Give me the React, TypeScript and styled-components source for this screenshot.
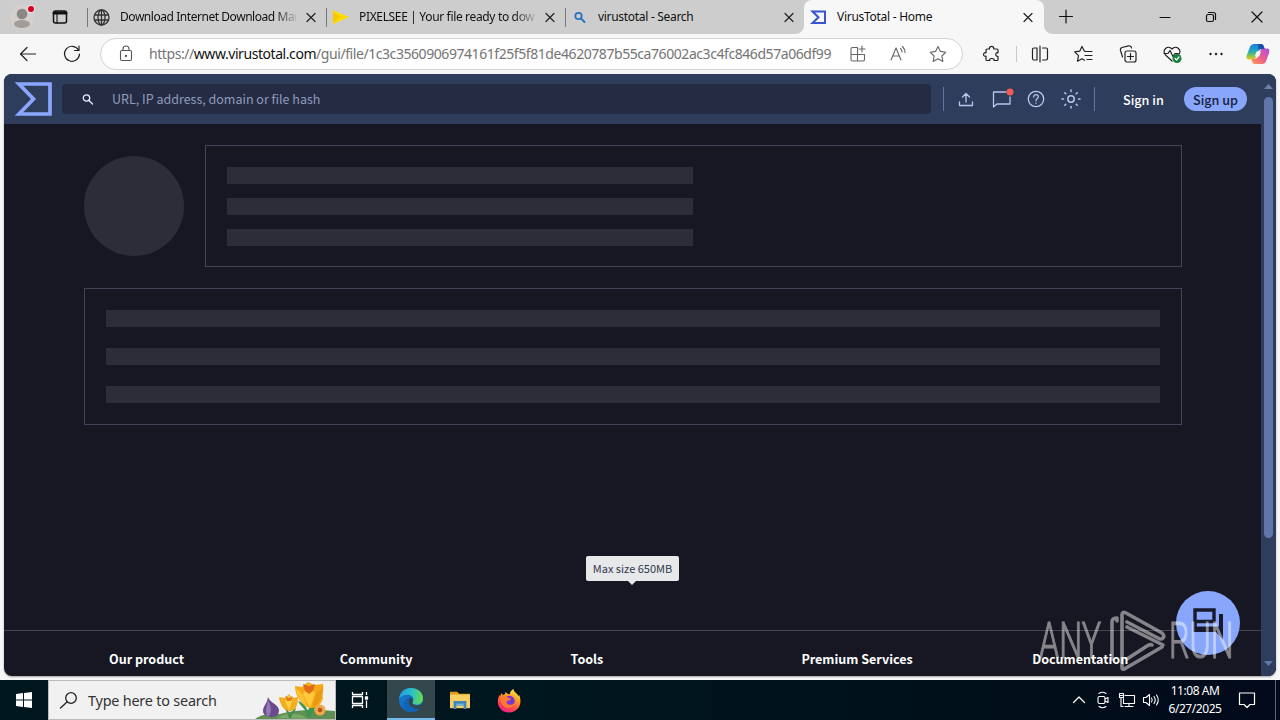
import React from "react";
import styled, { createGlobalStyle } from "styled-components";

const Global = createGlobalStyle`
  * { box-sizing: border-box; }
  body { margin: 0; overflow: hidden; background: #f7f7f7; }
  svg { display: block; flex: none; overflow: visible; }
`;

const UI = `"Noto Sans", "Open Sans", sans-serif`;
const SOURCE = `"Noto Sans CJK JP", "Noto Sans", sans-serif`;

const Screen = styled.div`
  position: relative;
  width: 1280px;
  height: 720px;
  display: flex;
  flex-direction: column;
  overflow: hidden;
  background: #f7f7f7;
  font-family: ${UI};
`;

/* Browser tabs */
const TabStrip = styled.div`
  height: 34px;
  flex: none;
  display: flex;
  background: #cdcdcd;
`;
const Lead = styled.div`
  width: 87px;
  display: flex;
  align-items: center;
  gap: 16px;
  padding-left: 9px;
`;
const Tab = styled.div<{ $active?: boolean }>`
  position: relative;
  width: ${(p) => (p.$active ? 240 : 239)}px;
  display: flex;
  align-items: center;
  padding-left: 6px;
  background: ${(p) => (p.$active ? "#f7f7f7" : "transparent")};
  border-radius: ${(p) => (p.$active ? "8px 8px 0 0" : 0)};
  ${(p) =>
    p.$active
      ? `&::before, &::after { content: ""; position: absolute; bottom: 0; width: 8px; height: 8px; }
         &::before { left: -8px; background: radial-gradient(circle at 0 0, transparent 7.5px, #f7f7f7 8px); }
         &::after { right: -8px; background: radial-gradient(circle at 100% 0, transparent 7.5px, #f7f7f7 8px); }`
      : `&::before { content: ""; position: absolute; left: 0; top: 8px; width: 1px; height: 19px; background: #777; }`}
`;
const TabTitle = styled.div<{ $spacing: number; $fade?: boolean }>`
  width: 176px;
  margin: 0 7px 0 10px;
  overflow: hidden;
  white-space: nowrap;
  font-size: 12px;
  line-height: 18px;
  letter-spacing: ${(p) => p.$spacing}px;
  color: #111;
  ${(p) => p.$fade && "mask-image: linear-gradient(90deg, #000 88%, transparent 102%);"}
`;
const WindowButtons = styled.div`
  flex: 1;
  display: flex;
  align-items: center;
`;
const Cell = styled.div<{ $w: number }>`
  width: ${(p) => p.$w}px;
  height: 100%;
  flex: none;
  display: flex;
  align-items: center;
  justify-content: center;
`;

/* Address row */
const Toolbar = styled.div`
  height: 40px;
  flex: none;
  display: flex;
  align-items: center;
  padding-left: 6px;
`;
const AddressBar = styled.div`
  width: 863px;
  height: 32px;
  margin: 0 7px 0 6px;
  display: flex;
  align-items: center;
  padding-left: 4px;
  background: #fff;
  border: 1px solid #d3d3d3;
  border-radius: 16px;
`;
const Url = styled.div`
  width: 689px;
  white-space: nowrap;
  font-size: 14px;
  line-height: 20px;
  letter-spacing: -0.435px;
  color: #747474;
  b { font-weight: 400; color: #111; }
`;
const Divider = styled.div<{ $h: number; $c: string }>`
  width: 1px;
  height: ${(p) => p.$h}px;
  background: ${(p) => p.$c};
  flex: none;
`;

/* Web page */
const Page = styled.div`
  width: 1272px;
  height: 602px;
  margin-left: 4px;
  flex: none;
  display: flex;
  border-radius: 8px;
  overflow: hidden;
  background: #161722;
  box-shadow: 0 1px 2px rgba(0, 0, 0, 0.35);
  font-family: ${SOURCE};
`;
const Site = styled.div`
  width: 1257px;
  display: flex;
  flex-direction: column;
`;
const Header = styled.header`
  height: 50px;
  flex: none;
  display: flex;
  align-items: center;
  padding-left: 10px;
  background: #2f3d5c;
`;
const SearchField = styled.div`
  width: 869px;
  height: 30px;
  margin: 0 12px 0 10px;
  display: flex;
  align-items: center;
  gap: 18px;
  padding-left: 20px;
  border-radius: 4px;
  background: #242b42;
  font-size: 12.5px;
  line-height: 20px;
  color: #8f9dbd;
`;
const SignIn = styled.div`
  width: 61px;
  margin-left: 28px;
  font-size: 12.6px;
  font-weight: 500;
  color: #fff;
  white-space: nowrap;
`;
const SignUp = styled.div`
  width: 63px;
  height: 24px;
  display: flex;
  align-items: center;
  justify-content: center;
  border-radius: 12px;
  background: #87a6fc;
  color: #19203a;
  font-size: 12.6px;
  font-weight: 500;
  white-space: nowrap;
`;
const Content = styled.main`
  height: 506px;
  flex: none;
  padding: 21px 79px 0 80px;
`;
const Summary = styled.div`
  display: flex;
  gap: 21px;
  padding-bottom: 21px;
`;
const Avatar = styled.div`
  width: 100px;
  height: 100px;
  margin-top: 11px;
  border-radius: 50%;
  background: #2c2d39;
`;
const Card = styled.div<{ $h: number; $gap: number }>`
  flex: 1;
  height: ${(p) => p.$h}px;
  display: flex;
  flex-direction: column;
  gap: ${(p) => p.$gap}px;
  padding: 21px 21px 20px;
  border: 1px solid #424358;
`;
const Bar = styled.div<{ $w?: number }>`
  width: ${(p) => (p.$w ? p.$w + "px" : "100%")};
  height: 17px;
  flex: 0 1 auto;
  background: #2c2d39;
`;
const Footer = styled.footer`
  flex: 1;
  display: flex;
  padding: 18px 0 0 105px;
  border-top: 1px solid #43454f;
`;
const FooterTitle = styled.div`
  width: 230.8px;
  flex: none;
  font-size: 12.55px;
  line-height: 20px;
  font-weight: 700;
  color: #fff;
  white-space: nowrap;
`;
const Tooltip = styled.div`
  position: absolute;
  left: 586px;
  top: 556px;
  width: 93px;
  height: 25px;
  display: flex;
  align-items: center;
  justify-content: center;
  padding-bottom: 2px;
  border-radius: 2px;
  background: #e7e8ea;
  color: #30374d;
  font: 11px ${SOURCE};
  white-space: nowrap;
  &::after {
    content: "";
    position: absolute;
    left: 42px;
    top: 25px;
    border: 4px solid transparent;
    border-top-color: #e7e8ea;
  }
`;
const Fab = styled.div`
  position: absolute;
  left: 1176px;
  top: 591px;
  width: 64px;
  height: 64px;
  border-radius: 50%;
  background: #87a6fc;
  display: flex;
  align-items: center;
  justify-content: center;
`;
const Watermark = styled.div`
  position: absolute;
  left: 1039px;
  top: 607px;
  display: flex;
  align-items: center;
  opacity: 0.47;
  color: #fff;
`;
const MarkText = styled.div<{ $w: number; $scale: number }>`
  width: ${(p) => p.$w}px;
  font: 300 50px/68px Roboto, sans-serif;
  -webkit-text-stroke: 1.1px #fff;
  white-space: nowrap;
  transform: scaleX(${(p) => p.$scale});
  transform-origin: 0 50%;
`;
const Scrollbar = styled.div`
  width: 15px;
  display: flex;
  flex-direction: column;
  align-items: center;
  padding-top: 10px;
  background: #2f3d5c;
`;
const Thumb = styled.div`
  width: 9px;
  height: 441px;
  margin: 8px 0 123px;
  border-radius: 5px;
  background: #6076a8;
`;

/* Desktop taskbar */
const Taskbar = styled.div`
  height: 40px;
  margin-top: 4px;
  flex: none;
  display: flex;
  align-items: center;
  background: linear-gradient(90deg, #00171f 0%, #00161f 45%, #001019 75%, #020a1b 100%);
  color: #fff;
`;
const TaskSearch = styled.div`
  width: 288px;
  height: 40px;
  display: flex;
  align-items: center;
  padding-left: 12px;
  border: 1px solid #bcbcbc;
  background: #f1f1f1;
  overflow: hidden;
`;
const TaskPrompt = styled.div`
  width: 170px;
  margin-left: 10px;
  font-size: 14.4px;
  letter-spacing: -0.2px;
  color: #333;
  white-space: nowrap;
`;
const AppCell = styled(Cell)<{ $active?: boolean }>`
  background: ${(p) => (p.$active ? "#33474d" : "transparent")};
  box-shadow: ${(p) => (p.$active ? "inset 0 -2px #76b9ed" : "none")};
`;
const Tray = styled.div`
  margin-left: auto;
  height: 100%;
  display: flex;
  align-items: center;
`;
const Clock = styled.div`
  width: 64px;
  text-align: center;
  font-size: 12px;
  line-height: 18px;
  letter-spacing: -0.45px;
  white-space: nowrap;
`;
const ShowDesktop = styled.div`
  width: 5px;
  height: 100%;
  border-left: 1px solid #5c6570;
`;

type IconProps = { w?: number; h?: number; c?: string; sw?: number; children: React.ReactNode };
const Icon = ({ w = 20, h = 20, c = "#222", sw = 1.2, children }: IconProps) => (
  <svg width={w} height={h} viewBox={`0 0 ${w} ${h}`} fill="none" stroke={c} strokeWidth={sw} strokeLinecap="round" strokeLinejoin="round">
    {children}
  </svg>
);
const Close = () => (
  <Icon w={16} h={16} sw={1.2}><path d="M4 4.500l8 8M12 4.500l-8 8" /></Icon>
);

const Profile = () => (
  <Icon w={26} h={26} c="none">
    <circle cx="13" cy="13" r="12" fill="#d3d0ce" />
    <circle cx="13" cy="10" r="5.3" fill="#8a8785" />
    <ellipse cx="13" cy="20" rx="8" ry="4" fill="#a09d9a" />
    <circle cx="22" cy="5" r="4.3" fill="#e5dcdc" />
    <circle cx="22" cy="5" r="3" fill="#d4001c" />
  </Icon>
);
const Flowers = () => (
  <svg width="80" height="38" viewBox="0 0 80 38">
    <path d="M0 38c6-5 16-6 25-5 14-4 34-5 55-3v8z" fill="#5f8f55" />
    <path d="M22 37c8-5 16-5 24-3l8 4z" fill="#79a866" />
    <path d="M13 16c2 6 10 7 11 13 0 5-3 7-8 7s-8-3-8-6c0-5 4-7 5-14z" fill="#6a4a8c" />
    <path d="M13 19c-1 6-3 9-1 17 5-2 5-9 1-17z" fill="#9479b3" />
    <path d="M34 37c-1-6-4-8-5-11 4 2 5 5 6 8 1-3 4-6 6-7-1 5-5 6-5 10z" fill="#3c8a4c" />
    <path d="M24 16l6 1 4-4 3 4 6-1c0 7-2 14-8 14s-10-6-11-14z" fill="#f2ae1c" />
    <path d="M34 14l3 6-3 9-4-9z" fill="#ffcf45" /><path d="M30 15l4 2 4-2-2 5h-4z" fill="#e27a1a" />
    <path d="M52 36c0-8-7-11-9-16 6 2 8 6 10 10 1-6 6-8 11-10-2 8-8 9-8 16z" fill="#3d944b" />
    <path d="M40 5l7 1 6-5 6 3 9-1c1 6-1 11 0 14-2 7-6 10-12 10S40 17 40 5z" fill="#f3a915" />
    <path d="M54 3l6 10-5 14-7-14z" fill="#ffc93a" />
    <path d="M48 3l6 2 6-2-2 7-4 3-4-3z" fill="#df6d18" /><path d="M41 7l7 7 4 11c-6-2-10-9-11-18z" fill="#fbc238" />
    <path d="M68 6l-7 7-4 13c7-2 10-10 11-20z" fill="#e99a12" />
    <circle cx="65" cy="29" r="5.500" fill="#f0a84a" /><circle cx="65" cy="29" r="2.300" fill="#b3551a" />
  </svg>
);
const Copilot = () => (
  <svg width="24" height="24" viewBox="0 0 24 24">
    <defs>
      <linearGradient id="cpA" x1="0" y1="0" x2="0" y2="1"><stop stopColor="#1c80d8" /><stop offset=".45" stopColor="#22a6c6" /><stop offset=".75" stopColor="#7ac54e" /><stop offset="1" stopColor="#f2c41a" /></linearGradient>
      <linearGradient id="cpB" x1="1" y1="0" x2="0" y2="1"><stop stopColor="#a952e5" /><stop offset=".5" stopColor="#ed5a91" /><stop offset="1" stopColor="#ff9d4d" /></linearGradient>
    </defs>
    <path d="M8 2h7c2 0 2.500 1.500 3 3l.7 2h-3c-2 0-3 1-3.600 3l-2 5c-.7 2-1.500 2.500-4 2.500H3.500c-3 0-3.400-2-2.600-4.500L3.500 6C4.500 3 6 2 8 2z" fill="url(#cpA)" />
    <path d="M16 22H9c-2 0-2.500-1.500-3-3l-.5-2h3c2 0 3-1 3.600-3l2-5c.7-2 1.500-2.500 4-2.500h2.400c3 0 3.400 2 2.600 4.500L20.500 18c-1 3-2.500 4-4.500 4z" fill="url(#cpB)" />
    <path d="M10.500 9.500h4.500l-1.700 5H8.700z" fill="#f7f7f7" />
    <path d="M12 2h3c2 0 2.500 1.500 3 3l.7 2h-3.200c-1.500 0-2.300.5-2.800 1.500z" fill="#1b4fae" />
  </svg>
);
const Edge = () => (
  <svg width="26" height="26" viewBox="0 0 26 26">
    <defs>
      <linearGradient id="edA" x1="0" y1=".3" x2="1" y2=".4"><stop stopColor="#2499e0" /><stop offset=".5" stopColor="#28bfcb" /><stop offset="1" stopColor="#68da55" /></linearGradient>
      <linearGradient id="edB" x1="0" y1="0" x2="1" y2="1"><stop stopColor="#1582dc" /><stop offset="1" stopColor="#0b56a4" /></linearGradient>
    </defs>
    <circle cx="13" cy="13" r="12" fill="url(#edB)" />
    <path d="M1.100 12C1.500 5.500 6.500 1 13 1c7 0 12 4.700 12 10.400 0 4-2.800 6.300-6.300 6.300-2.600 0-4.400-.9-4.400-2 0-.8 1-1.200 1-3.200 0-2.500-2.300-4.700-5.800-4.700-4 0-7.200 2-8.400 4.200z" fill="url(#edA)" />
    <path d="M14.300 15.300c0 1.800 2 3.400 5 3.400 2 0 3.500-.6 4.500-1.400l1.500-.5-2 5c-6 1-12.800-2.300-12.800-6.800 0-2 .8-3.500 2-4.600 1.500.6 2.500 1.800 2.500 3 0 1-.7 1.200-.7 1.900z" fill="#33474d" />
    <path d="M10.500 15c0 5 5 8.500 10.800 6.800C19 24 16.300 25 13 25c-4-1-6.500-4.500-6.500-8.300 0-4 2.800-6.200 6-6.300-1.200 1.200-2 2.600-2 4.600z" fill="#1262b7" />
  </svg>
);
const Explorer = () => (
  <svg width="22" height="20" viewBox="0 0 24 22">
    <path d="M1 2h8l2 2h12v4H1z" fill="#e49b1c" />
    <path d="M1 5h22v15H1z" fill="#f7cf62" />
    <path d="M5 12h14v9h-3v-4H8v4H5z" fill="#3d87bd" /><path d="M8 15h8v2H8z" fill="#6fb4dc" />
  </svg>
);
const Firefox = () => (
  <svg width="24" height="25" viewBox="0 0 24 25">
    <defs>
      <linearGradient id="ffA" x1=".8" y1="0" x2=".3" y2="1"><stop stopColor="#fff047" /><stop offset=".4" stopColor="#ff9425" /><stop offset=".75" stopColor="#ff4053" /><stop offset="1" stopColor="#e62184" /></linearGradient>
    </defs>
    <path d="M4 5l2 2 2-1 .5-2L11 6l2 .3C12.500 4 14.500 2 16.500 1c0 3 3.500 4 5 7l.8-1c1.500 4 1.700 8-.3 12-2 3.500-5.800 5.500-10 5.500C5 24.500.6 19 .8 13c0-3 1.200-4.500 1.700-6l1 1z" fill="url(#ffA)" />
    <circle cx="12.500" cy="13" r="5.200" fill="#7a35d7" />
    <path d="M4 9c3-2 6 0 8 1l2 1c-1 2-4 1-4.500 3 0 3 5 4 8 1-1 5-8 7-12 2-2-3-2-6-1.500-8z" fill="#ff7930" />
  </svg>
);

export default function App() {
  return (
    <Screen>
      <Global />
      <TabStrip>
        <Lead>
          <Profile />
          <Icon w={18} h={18} c="#111" sw={1.5}><rect x="2.500" y="3" width="13" height="12" rx="2" /><path d="M3 5h12" strokeWidth="3" /><path d="M6 6v9" strokeWidth="1.100" /></Icon>
        </Lead>
        <Tab>
          <Icon w={17} h={17} c="#333" sw={1.3}><circle cx="8.500" cy="8.500" r="7.500" /><ellipse cx="8.500" cy="8.500" rx="3.500" ry="7.500" /><path d="M1.500 6h14M1.500 11h14M8.500 1v15" /></Icon>
          <TabTitle $spacing={-0.45} $fade>Download Internet Download Manager</TabTitle>
          <Close />
        </Tab>
        <Tab>
          <Icon w={17} h={16} c="none"><path d="M0 1l17 7L0 15.500l3-7z" fill="#ffdc00" /><path d="M1 3l8 5-8 6z" fill="#f6c900" /></Icon>
          <TabTitle $spacing={-0.34} $fade>PIXELSEE | Your file ready to download</TabTitle>
          <Close />
        </Tab>
        <Tab>
          <Icon w={17} h={16} c="#2871bd" sw={1.8}><circle cx="7.500" cy="7" r="3.200" /><path d="M10 9.500l3.500 3.500" /></Icon>
          <TabTitle $spacing={-0.3}>virustotal - Search</TabTitle>
          <Close />
        </Tab>
        <Tab $active>
          <Icon w={17} h={16} c="#3854d2" sw={2}><path d="M2.500 2.500h12.500v11.500H2.500l6-5.700z" strokeLinejoin="miter" /></Icon>
          <TabTitle $spacing={-0.28}>VirusTotal - Home</TabTitle>
          <Close />
        </Tab>
        <WindowButtons>
          <Cell $w={43}><Icon c="#111" sw={1.2}><path d="M10 3v13M3.500 9.500h13" /></Icon></Cell>
          <Cell $w={55} />
          <Cell $w={46}><Icon c="#111" sw={1.1}><path d="M5 10.500h10" /></Icon></Cell>
          <Cell $w={46}><Icon c="#111" sw={1.2}><rect x="5.500" y="7.500" width="7" height="7" rx="1.500" /><path d="M7.500 5.500h5a2 2 0 0 1 2 2v5" /></Icon></Cell>
          <Cell $w={46}><Icon c="#111" sw={1.2}><path d="M5 5l10 10M15 5L5 15" /></Icon></Cell>
        </WindowButtons>
      </TabStrip>

      <Toolbar>
        <Cell $w={44}><Icon><path d="M17.500 10h-15M9 3.500L2.500 10 9 16.500" /></Icon></Cell>
        <Cell $w={44}><Icon><path d="M16.500 6A7.500 7.500 0 1 0 17.500 10M17 2v4.500h-4.500" /></Icon></Cell>
        <AddressBar>
          <Cell $w={42}><Icon c="#555" sw={1.1}><rect x="4.500" y="6.500" width="11" height="10" rx="1.500" /><path d="M7 6.500V5a3 3 0 0 1 6 0v1.500" /><circle cx="10" cy="12" r=".6" fill="#555" /></Icon></Cell>
          <Cell $w={2} />
          <Url>https://<b>www.virustotal.com</b>/gui/file/1c3c3560906974161f25f5f81de4620787b55ca76002ac3c4fc846d57a06df99</Url>
          <Cell $w={40}><Icon c="#666" sw={1.1}><path d="M9.500 3.500H4.500a1.500 1.500 0 0 0-1.500 1.500v10.500A1.500 1.500 0 0 0 4.500 17H15a1.500 1.500 0 0 0 1.500-1.500V10.500H3M9.500 3.500v13.500M14 2v6M11 5h6" /></Icon></Cell>
          <Cell $w={40}><Icon c="#666" sw={1.1}><path d="M3 16L8 4l5 12M4.700 12h6.600M12.500 4.500c1 .8 1.500 2 1.500 3.500M14.500 2.500c1.500 1.500 2.500 3.500 2.500 6" /></Icon></Cell>
          <Cell $w={40}><Icon c="#666" sw={1.1}><path d="M10 2.500l2.400 4.900 5.400.8-3.900 3.800.9 5.400-4.800-2.600-4.800 2.600.9-5.400-3.900-3.800 5.400-.8z" /></Icon></Cell>
        </AddressBar>
        <Cell $w={44}><Icon><path d="M5 5h2.500c-.8-3.500 5-3.500 4.200 0H15a1 1 0 0 1 1 1v2.800c-3-.8-3 4.200 0 3.500V15.500a1 1 0 0 1-1 1h-3c.7-1-.2-2-2.200-2s-2.700 1-2 2H5a1 1 0 0 1-1-1v-3.300c-3.300.7-3.300-4.200 0-3.400V6a1 1 0 0 1 1-1z" /></Icon></Cell>
        <Cell $w={2} />
        <Divider $h={16} $c="#c9c9c9" />
        <Cell $w={1} />
        <Cell $w={44}><Icon><path d="M7 4H4A1.500 1.500 0 0 0 2.500 5.500v9A1.500 1.500 0 0 0 4 16h3V4M12.500 4H16A1.500 1.500 0 0 1 17.500 5.500v9A1.500 1.500 0 0 1 16 16h-3.500M10 2v16" /></Icon></Cell>
        <Cell $w={44}><Icon><path d="M12 7.500l-1.600-.3L8 2.500 5.700 7.200l-5 .7 3.800 3.700-1 5.600L8 14.700l2.500 1.500M12.500 7.500H18M11 11.500h7M13 15.500h5" /></Icon></Cell>
        <Cell $w={44}><Icon><rect x="7" y="7" width="11" height="11" rx="2" /><path d="M4.500 13L2.500 6.500A2.500 2.500 0 0 1 4 3.500l6.500-1.700A2.500 2.500 0 0 1 13.500 4M12.500 9.500v6M9.500 12.500h6" /></Icon></Cell>
        <Cell $w={44}><Icon><path d="M10 17L3.500 11C-1 6 6 .5 10 5c4-4.500 11 1 6.500 6M2 9.500h4l2-3 3 6 2-3h3" /><circle cx="15" cy="14.500" r="4.500" fill="#15823b" stroke="none" /><path d="M13 14.500l1.500 1.500 2.500-3" stroke="#fff" /></Icon></Cell>
        <Cell $w={44}><Icon c="none"><g fill="#222"><circle cx="4.500" cy="10" r="1.200" /><circle cx="10" cy="10" r="1.200" /><circle cx="15.500" cy="10" r="1.200" /></g></Icon></Cell>
        <Cell $w={40}><Copilot /></Cell>
      </Toolbar>

      <Page>
        <Site>
          <Header>
            <svg width="38" height="34" viewBox="0 0 38 34"><path d="M5 2h31v30H5l14.500-15z" fill="none" stroke="#8ba6ff" strokeWidth="3.700" /></svg>
            <SearchField>
              <Icon w={12} h={12} c="#edf1ff" sw={1.3}><circle cx="4.500" cy="5" r="3.200" /><path d="M7 7.500l3.500 3.500" /></Icon>
              URL, IP address, domain or file hash
            </SearchField>
            <Divider $h={24} $c="#6175a4" />
            <Cell $w={5} />
            <Cell $w={35}><Icon w={21} c="#b7c6ed" sw={1.3}><path d="M10 13V4.500M6.500 8L10 4.500 13.500 8M3.500 13v3.500h13V13" /></Icon></Cell>
            <Cell $w={35}><Icon w={22} h={22} c="#b7c6ed" sw={1.3}><path d="M15 4H2.500v15l3.500-3h13V9" /><circle cx="19" cy="4" r="3.500" fill="#f45b55" stroke="none" /></Icon></Cell>
            <Cell $w={35}><Icon w={21} c="#b7c6ed" sw={1.3}><circle cx="10" cy="10" r="7.700" /><path d="M7.700 8c0-3.200 5-3 4.600 0-.2 1.500-2.300 1.800-2.300 3.700M10 14v.2" /></Icon></Cell>
            <Cell $w={35}><Icon w={21} c="#b7c6ed" sw={1.5}><circle cx="10" cy="10" r="3.200" /><path d="M10 1v1.500M10 17.500V19M1 10h1.500M17.500 10H19M3.800 3.800l1 1M15.200 15.200l1 1M16.200 3.800l-1 1M4.800 15.200l-1 1" /></Icon></Cell>
            <Cell $w={5} />
            <Divider $h={24} $c="#6175a4" />
            <SignIn>Sign in</SignIn>
            <SignUp>Sign up</SignUp>
          </Header>
          <Content>
            <Summary>
              <Avatar />
              <Card $h={122} $gap={14}>
                <Bar $w={466} /><Bar $w={466} /><Bar $w={466} />
              </Card>
            </Summary>
            <Card $h={137} $gap={21}><Bar /><Bar /><Bar /></Card>
          </Content>
          <Footer>
            <FooterTitle>Our product</FooterTitle>
            <FooterTitle>Community</FooterTitle>
            <FooterTitle>Tools</FooterTitle>
            <FooterTitle>Premium Services</FooterTitle>
            <FooterTitle>Documentation</FooterTitle>
          </Footer>
        </Site>
        <Scrollbar>
          <svg width="9" height="5"><path d="M0 5l4.500-5L9 5z" fill="#6e80aa" /></svg>
          <Thumb />
          <svg width="9" height="5"><path d="M0 0l4.500 5L9 0z" fill="#6076a8" /></svg>
        </Scrollbar>
      </Page>

      <Taskbar>
        <Cell $w={48}><svg width="16" height="16" viewBox="0 0 16 16"><path d="M0 2l7-1v6.500H0zM8 .9L16 0v7.500H8zM0 8.500h7V15l-7-1zM8 8.500h8V16l-8-.9z" fill="#fff" /></svg></Cell>
        <TaskSearch>
          <Icon w={17} h={17} c="#222" sw={1.3}><circle cx="10" cy="6" r="5.300" /><path d="M6 10L-.500 16" /></Icon>
          <TaskPrompt>Type here to search</TaskPrompt>
          <Flowers />
        </TaskSearch>
        <Cell $w={48}><Icon w={18} h={16} c="#fff" sw={1.3}><path d="M1.500 0v2.500h10V0M1.500 16v-2.500h10V16M1.500 4.500h10v7h-10zM15.500 0v3M15.500 8.500V16" strokeLinecap="butt" /><rect x="14.500" y="5" width="2" height="2" fill="#fff" /></Icon></Cell>
        <Cell $w={3} />
        <AppCell $w={48} $active><Edge /></AppCell>
        <Cell $w={1} />
        <AppCell $w={48}><Explorer /></AppCell>
        <Cell $w={1} />
        <AppCell $w={48}><Firefox /></AppCell>
        <Tray>
          <Cell $w={24}><Icon w={14} h={10} c="#fff" sw={1.2}><path d="M1.500 7.500L7 2l5.500 5.500" /></Icon></Cell>
          <Cell $w={24}><Icon w={14} h={18} c="#fff" sw={1.1}><rect x="2" y="5.500" width="7" height="7" rx="1.500" /><path d="M9 8l3-1.500v5L9 10M3 2.500Q6.500 0 10 2.500M3 15.500Q6.500 18 10 15.500" /></Icon></Cell>
          <Cell $w={24}><Icon w={18} h={16} c="#fff" sw={1.1}><path d="M7 3.500h9.500v8H5.500v-5M11 11.500v3M7 14.500h8M3 5.500v9h2" /><path d="M1.500 1.500h4v4h-4zM2.500 3.500h2" /></Icon></Cell>
          <Cell $w={24}><Icon w={18} h={16} c="#fff" sw={1.1}><path d="M1.500 5.500H4L7.500 2.500v11L4 10.500H1.500zM9.500 6q1.500 2 0 4M12 4.500q2.500 3.500 0 7M14.500 3q3.500 5 0 10" /></Icon></Cell>
          <Clock>11:08 AM<br />6/27/2025</Clock>
          <Cell $w={40}><Icon w={18} h={18} c="#fff" sw={1.2}><path d="M1.500 2h15v11.500H12L9 16.500l-3-3H1.500z" /></Icon></Cell>
          <Cell $w={8} />
          <ShowDesktop />
        </Tray>
      </Taskbar>

      <Tooltip>Max size 650MB</Tooltip>
      <Fab>
        <svg width="32" height="32" viewBox="0 0 32 32"><path d="M3 3h19v11.500H3z" fill="none" stroke="#171a2c" strokeWidth="3.400" /><path d="M1.300 16h3.500v3.500H27V7h4v26l-7-8H1.300z" fill="#171a2c" /></svg>
      </Fab>
      <Watermark>
        <MarkText $w={70} $scale={0.645}>ANY</MarkText>
        <svg width="60" height="68" viewBox="0 0 60 68" fill="none" stroke="#fff" strokeWidth="3.600" strokeLinejoin="round" strokeLinecap="round">
          <path d="M3 52V15q0-4 5-4v3" />
          <path d="M53 40L17 61q-4 3-4-1V8q0-4 4-2l36 20q3 3 1 5-2 2-5 0L18 15" />
          <path d="M18 52l20-13q3-2 5-1M18 20l36 18" />
        </svg>
        <MarkText $w={62} $scale={0.645}>RUN</MarkText>
      </Watermark>
    </Screen>
  );
}
